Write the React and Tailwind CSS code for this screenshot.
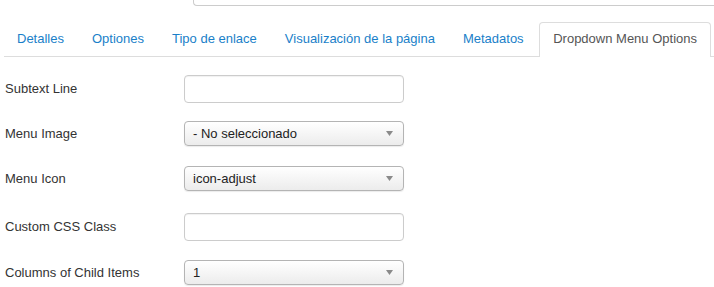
import React from 'react';

const tabs = ['Detalles', 'Optiones', 'Tipo de enlace', 'Visualización de la página', 'Metadatos'];

function TextField() {
  return <div className="h-[28px] w-[220px] rounded-[4px] border border-[#ccc] bg-white shadow-[inset_0_1px_1px_rgba(0,0,0,0.06)]" />;
}

function SelectField({ value }) {
  return (
    <div className="flex h-[25px] w-[220px] items-center justify-between rounded-[4px] border border-[#b4b4b4] bg-gradient-to-b from-white to-[#ececec] pl-[8px] pr-[10px] text-[13px] text-[#222] shadow-[0_1px_1px_rgba(0,0,0,0.08)]">
      <span>{value}</span>
      <svg width="7" height="5" viewBox="0 0 7 5"><path d="M0 0h7L3.5 5z" fill="#8a8a8a" /></svg>
    </div>
  );
}

const rows = [
  { label: 'Subtext Line', type: 'text', mb: 'mb-[18px]' },
  { label: 'Menu Image', type: 'select', value: '- No seleccionado', mb: 'mb-[20px]' },
  { label: 'Menu Icon', type: 'select', value: 'icon-adjust', mb: 'mb-[22px]' },
  { label: 'Custom CSS Class', type: 'text', mb: 'mb-[19px]' },
  { label: 'Columns of Child Items', type: 'select', value: '1', mb: '' },
];

export default function App() {
  return (
    <div className="h-[287px] w-[714px] overflow-hidden bg-white font-['Liberation_Sans',Arial,sans-serif] text-[13px]">
      {/* cut-off field on top */}
      <div className="ml-[193px] h-[6px] rounded-bl-[4px] border-b border-l border-[#ccc]" />

      {/* Tabs */}
      <div className="ml-[4px] mt-[16px] flex h-[35px] items-end border-b border-[#ddd]">
        {tabs.map(t => (
          <div key={t} className="mr-[2px] px-[13px] pb-[8px] text-[#1a7fc9] leading-[18px]">{t}</div>
        ))}
        <div className="mb-[-1px] ml-auto mr-[3px] rounded-t-[4px] border border-b-0 border-[#ddd] bg-white px-[13px] pb-[9px] pt-[7px] leading-[18px] text-[#555]">
          Dropdown Menu Options
        </div>
      </div>

      {/* Form */}
      <div className="mt-[18px] flex flex-col pl-[5px]">
        {rows.map(r => (
          <div key={r.label} className={`flex items-center ${r.mb}`}>
            <div className="w-[179px] text-[#333]">{r.label}</div>
            {r.type === 'text' ? <TextField /> : <SelectField value={r.value} />}
          </div>
        ))}
      </div>
    </div>
  );
}
